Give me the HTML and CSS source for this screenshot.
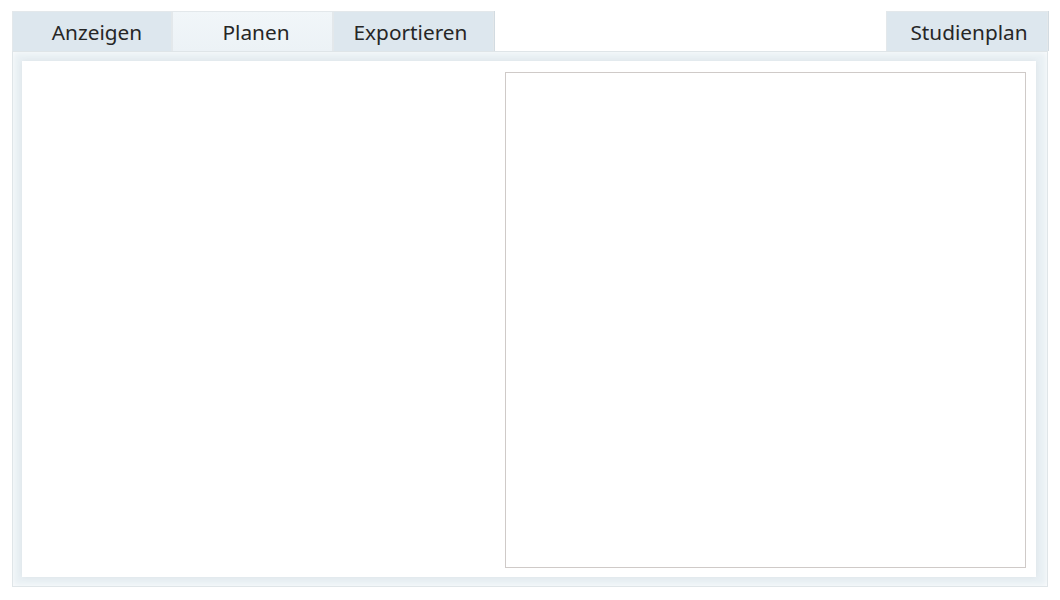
FILE: index.html
```html
<!DOCTYPE html>
<html lang="de">
<head>
<meta charset="utf-8">
<title>Studienplan</title>
<link rel="stylesheet" href="styles.css">
</head>
<body>
<div class="app">
  <div class="tabs">
    <div class="tab t-show">Anzeigen</div>
    <div class="tab active">Planen</div>
    <div class="tab t-export">Exportieren</div>
    <div class="spacer"></div>
    <div class="tab right">Studienplan</div>
  </div>
  <div class="panel">
    <div class="content">
      <div class="left"></div>
      <div class="box"></div>
    </div>
  </div>
</div>
</body>
</html>
```

FILE: styles.css
```css
html, body {
  margin: 0;
  padding: 0;
  background: #ffffff;
}
body {
  font-family: "Noto Sans", "Open Sans", sans-serif;
  color: #262626;
}
.app {
  padding: 11px 12px 0 12px;
  width: 1036px;
}
.tabs {
  display: flex;
  height: 40px;
}
.tab {
  width: 161px;
  box-sizing: border-box;
  background: #dde7ee;
  border: 1px solid #e3e8eb;
  border-bottom: none;
  font-size: 20.8px;
  line-height: 40px;
  text-align: center;
  box-shadow: 1px 0 0 #d2dbe1;
}
.tab.t-show {
  width: 160px;
  padding-left: 10px;
}
.tab.active {
  background: linear-gradient(#f1f6f9, #ecf2f6);
  box-shadow: none;
  padding-left: 7px;
}
.tab.t-export {
  padding-right: 6px;
}
.tab.right {
  width: 162px;
  padding-left: 4px;
}
.spacer {
  flex: 1;
}
.panel {
  height: 536px;
  box-sizing: border-box;
  border: 1px solid #dfe5e8;
  background: #e9f0f4;
  padding: 9px 11px 9px 9px;
  box-shadow: inset 0 0 6px rgba(255,255,255,0.9);
}
.content {
  height: 100%;
  background: #fff;
  display: flex;
  box-shadow: 0 0 6px rgba(0,0,0,0.06);
}
.left {
  width: 483px;
}
.box {
  width: 521px;
  margin: 11px 0 9px 0;
  box-sizing: border-box;
  border: 1px solid #cfcac8;
}
```
